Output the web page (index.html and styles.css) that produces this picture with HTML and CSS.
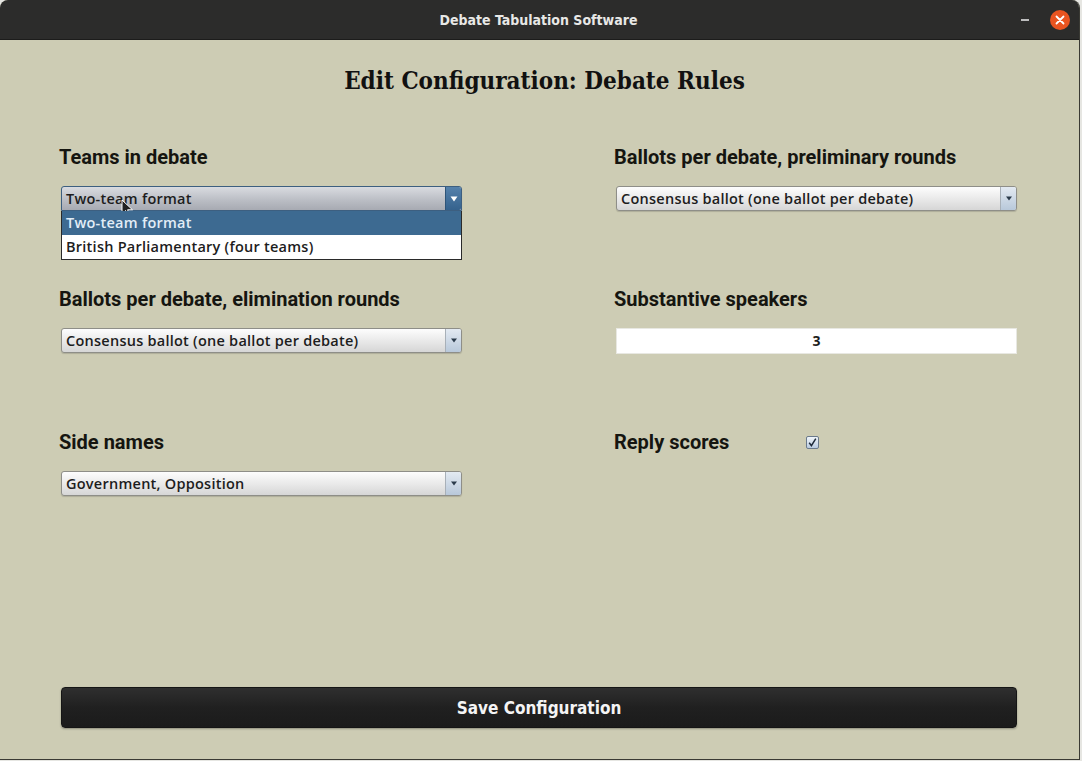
FILE: index.html
```html
<!DOCTYPE html>
<html>
<head>
<meta charset="utf-8">
<link rel="stylesheet" href="styles.css">
</head>
<body>
<div class="window">
  <div class="titlebar">
    <span class="title">Debate Tabulation Software</span>
    <div class="controls">
      <span class="minimize"></span>
      <span class="close">
        <svg width="20" height="20" viewBox="0 0 20 20"><path d="M6.5 6.5 L13.5 13.5 M13.5 6.5 L6.5 13.5" stroke="#fff" stroke-width="1.8" stroke-linecap="round"/></svg>
      </span>
    </div>
  </div>
  <div class="content">
    <h1 class="heading">Edit Configuration: Debate Rules</h1>
    <div class="grid">
      <div class="cell">
        <div class="label">Teams in debate</div>
        <div class="select-wrap">
          <div class="select open">
            <span class="value">Two-team format</span>
            <span class="arrow"><svg width="8" height="6" viewBox="0 0 8 6"><path d="M0.5 0.5 H7.5 L4 5.5 Z" fill="#fff"/></svg></span>
          </div>
          <svg class="cursor" width="14" height="20" viewBox="0 0 14 20"><path d="M1 1 L1 15 L4.5 11.5 L7 17.5 L9 16.6 L6.6 10.8 L11.5 10.8 Z" fill="#222" stroke="#fff" stroke-width="1"/></svg>
          <div class="dropdown">
            <div class="option selected">Two-team format</div>
            <div class="option">British Parliamentary (four teams)</div>
          </div>
        </div>
      </div>
      <div class="cell">
        <div class="label">Ballots per debate, preliminary rounds</div>
        <div class="select">
          <span class="value">Consensus ballot (one ballot per debate)</span>
          <span class="arrow"><svg width="6" height="5" viewBox="0 0 6 5"><path d="M0 0.5 H6 L3 4.5 Z" fill="#2a3a4a"/></svg></span>
        </div>
      </div>
      <div class="cell">
        <div class="label">Ballots per debate, elimination rounds</div>
        <div class="select">
          <span class="value">Consensus ballot (one ballot per debate)</span>
          <span class="arrow"><svg width="6" height="5" viewBox="0 0 6 5"><path d="M0 0.5 H6 L3 4.5 Z" fill="#2a3a4a"/></svg></span>
        </div>
      </div>
      <div class="cell">
        <div class="label">Substantive speakers</div>
        <div class="textinput">3</div>
      </div>
      <div class="cell">
        <div class="label">Side names</div>
        <div class="select">
          <span class="value">Government, Opposition</span>
          <span class="arrow"><svg width="6" height="5" viewBox="0 0 6 5"><path d="M0 0.5 H6 L3 4.5 Z" fill="#2a3a4a"/></svg></span>
        </div>
      </div>
      <div class="cell">
        <div class="label checkrow">Reply scores
          <span class="checkbox"><svg width="11" height="11" viewBox="0 0 11 11"><path d="M2.2 5.8 L4.4 8.6 L8.8 1.6" fill="none" stroke="#1e2a3a" stroke-width="1.5"/></svg></span>
        </div>
      </div>
    </div>
    <button class="save">Save Configuration</button>
  </div>
</div>
</body>
</html>
```

FILE: styles.css
```css
html, body {
  margin: 0;
  padding: 0;
  background: #e6e6e2;
}
.window {
  width: 1080px;
  height: 760px;
  display: flex;
  flex-direction: column;
  background: #cdccb4;
  border-right: 1px solid #3a3a34;
  border-bottom: 1px solid #3a3a34;
  border-radius: 8px 8px 0 0;
  overflow: hidden;
  box-sizing: border-box;
}
.titlebar {
  height: 40px;
  flex: none;
  background: #2c2c2b;
  display: flex;
  align-items: center;
  justify-content: center;
  position: relative;
  border-bottom: 1px solid #1c1c1b;
  box-sizing: border-box;
}
.title {
  font-family: "DejaVu Sans Condensed", "DejaVu Sans", sans-serif;
  font-stretch: condensed;
  font-weight: bold;
  font-size: 14px;
  color: #e8e8e6;
  margin-left: -2px;
}
.controls {
  position: absolute;
  right: 9px;
  top: 10px;
  display: flex;
  align-items: center;
  gap: 21px;
}
.minimize {
  width: 8px;
  height: 2px;
  background: #bdbdbd;
}
.close {
  width: 20px;
  height: 20px;
  border-radius: 50%;
  background: #e95420;
  display: flex;
}
.content {
  flex: 1;
  display: flex;
  flex-direction: column;
}
.heading {
  margin: 26px 0 0 0;
  height: 30px;
  line-height: 30px;
  text-align: center;
  font-family: "DejaVu Serif Condensed", "DejaVu Serif", serif;
  font-stretch: condensed;
  font-weight: bold;
  font-size: 24px;
  color: #111;
  padding-left: 10px;
}
.grid {
  margin-top: 50px;
  margin-left: 59px;
  display: grid;
  grid-template-columns: 405px 405px;
  column-gap: 150px;
  row-gap: 77px;
}
.cell {
  display: flex;
  flex-direction: column;
  gap: 18px;
}
.label {
  height: 22px;
  line-height: 22px;
  font-family: Roboto, "Liberation Sans", sans-serif;
  font-weight: bold;
  font-size: 20px;
  color: #151510;
}
.checkrow {
  display: flex;
  align-items: center;
}
.checkbox {
  margin-left: 77px;
  width: 13px;
  height: 13px;
  box-sizing: border-box;
  border: 1px solid #6a7a8c;
  border-radius: 2px;
  background: linear-gradient(#f0f5fa, #b9cbe0);
  display: flex;
  align-items: center;
  justify-content: center;
}
.select-wrap {
  position: relative;
}
.select {
  margin-left: 2px;
  width: 401px;
  height: 25px;
  box-sizing: border-box;
  border: 1px solid #8e8e88;
  border-radius: 3px;
  background: linear-gradient(#fdfdfd, #e6e6e6 60%, #d6d6d6);
  display: flex;
  align-items: center;
  box-shadow: 0 1px 1px rgba(0,0,0,0.15);
}
.value {
  flex: 1;
  padding-left: 4px;
  font-family: "Open Sans", "Noto Sans", sans-serif;
  font-weight: 600;
  font-size: 14.5px;
  letter-spacing: 0.25px;
  color: #1d1d1d;
  white-space: nowrap;
  overflow: hidden;
}
.arrow {
  width: 15px;
  height: 23px;
  border-left: 1px solid #a8b0b8;
  background: linear-gradient(#e3eaf2, #b8c8da);
  display: flex;
  align-items: center;
  justify-content: center;
  border-radius: 0 2px 2px 0;
}
.select.open {
  border-color: #3d5f80;
  background: linear-gradient(#d9dbe0, #b9bcc3 60%, #a7aab2);
  border-radius: 3px 3px 0 0;
}
.select.open .arrow {
  background: linear-gradient(#5581ab, #35628d);
  border-left-color: #2e5478;
}
.cursor {
  position: absolute;
  left: 62px;
  top: 13px;
}
.dropdown {
  position: absolute;
  left: 2px;
  top: 25px;
  width: 401px;
  box-sizing: border-box;
  border: 1px solid #2a2a2a;
  border-top: none;
  background: #fff;
  z-index: 2;
}
.option {
  height: 24px;
  line-height: 24px;
  padding-left: 4px;
  font-family: "Open Sans", "Noto Sans", sans-serif;
  font-weight: 600;
  font-size: 14.5px;
  letter-spacing: 0.25px;
  color: #1d1d1d;
}
.option.selected {
  background: #3d6a91;
  color: #e2edf7;
}
.textinput {
  margin-left: 2px;
  width: 401px;
  height: 26px;
  box-sizing: border-box;
  background: #fff;
  border: 1px solid #e8e8e2;
  text-align: center;
  line-height: 24px;
  font-family: "Open Sans", "Noto Sans", sans-serif;
  font-weight: 700;
  font-size: 14px;
  color: #1d1d1d;
}
.save {
  margin: auto 0 31px 61px;
  width: 956px;
  height: 41px;
  border: 1px solid #151515;
  border-radius: 4px;
  background: linear-gradient(#2f2f2f, #202020 50%, #1b1b1b);
  color: #f4f4f4;
  font-family: "DejaVu Sans Condensed", "DejaVu Sans", sans-serif;
  font-stretch: condensed;
  font-weight: bold;
  font-size: 17px;
  box-shadow: 0 1px 2px rgba(0,0,0,0.3);
  cursor: pointer;
}
```
